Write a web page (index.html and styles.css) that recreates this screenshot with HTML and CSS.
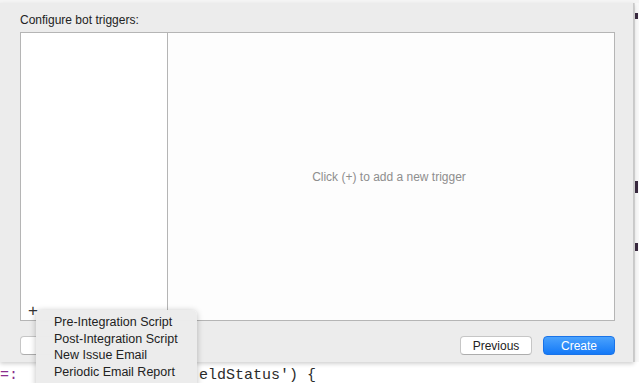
FILE: index.html
```html
<!doctype html>
<html>
<head>
<meta charset="utf-8">
<title>Configure bot triggers</title>
<link rel="stylesheet" href="styles.css">
</head>
<body>
<div class="screen">
  <div class="stage">
    <div class="dialog">
      <div class="label">Configure bot triggers:</div>
      <div class="triggers">
        <div class="list">
          <span class="add">+</span>
        </div>
        <div class="detail">Click (+) to add a new trigger</div>
      </div>
      <div class="footer">
        <button class="btn side">&nbsp;</button>
        <div class="spacer"></div>
        <button class="btn">Previous</button>
        <button class="btn primary">Create</button>
      </div>
    </div>
    <div class="gutter">
      <span class="frag f1"></span>
      <span class="frag f2"></span>
      <span class="frag f3"></span>
    </div>
  </div>
  <div class="code"><span class="kw">=:</span><span class="rest">eldStatus') {</span></div>

  <ul class="menu">
    <li>Pre-Integration Script</li>
    <li>Post-Integration Script</li>
    <li>New Issue Email</li>
    <li>Periodic Email Report</li>
  </ul>
</div>
</body>
</html>
```

FILE: styles.css
```css
html, body {
  margin: 0;
  padding: 0;
  background-color: white;
}
body {
  font-family: "Liberation Sans", Arial, sans-serif;
  font-size: 12px;
  color: #222;
  overflow: hidden;
}
.screen {
  position: relative;
  width: 639px;
  height: 383px;
  overflow: hidden;
}
.stage {
  display: flex;
  height: 362px;
  padding-top: 3px;
  box-sizing: border-box;
  background-color: #f4f4f4;
}
.dialog {
  width: 633px;
  flex-shrink: 0;
  background-color: #ececec;
  border-right: 1px solid #c9c9c9;
  box-shadow: 0 2px 4px rgba(0,0,0,0.18);
  display: flex;
  flex-direction: column;
  position: relative;
  z-index: 1;
}
.label {
  padding: 10px 0 0 20px;
  height: 19px;
  line-height: 14px;
  color: #222;
}
.triggers {
  margin: 0 18px 0 20px;
  height: 287px;
  border: 1px solid #b5b5b5;
  display: grid;
  grid-template-columns: 147px 1fr;
  background-color: white;
}
.list {
  border-right: 1px solid #b5b5b5;
  display: flex;
  align-items: flex-end;
  padding: 0 0 2px 7px;
}
.add {
  font-size: 17px;
  line-height: 14px;
  color: #333;
}
.detail {
  display: flex;
  align-items: center;
  justify-content: center;
  color: #8e8e8e;
  background-color: #fdfdfd;
  padding-right: 4px;
}
.footer {
  display: flex;
  align-items: center;
  margin: 15px 18px 0 20px;
  gap: 11px;
}
.spacer {
  flex: 1;
}
.btn {
  font-family: "Liberation Sans", Arial, sans-serif;
  font-size: 12px;
  height: 19px;
  width: 72px;
  padding: 0;
  border: 1px solid #c6c6c6;
  border-bottom-color: #adadad;
  border-radius: 4px;
  background-color: white;
  color: #222;
}
.btn.side {
  width: 40px;
}
.btn.primary {
  color: white;
  border-color: #1a73e8;
  background: linear-gradient(#4aa2fd, #1479f7);
}
.gutter {
  flex: 1;
  background-color: #f8f8f8;
  border-left: 1px solid #dcdcdc;
  display: flex;
  flex-direction: column;
}
.frag {
  display: block;
  width: 3px;
  margin-left: 0;
  background-color: #3a2a40;
}
.f1 { height: 6px; margin-top: 10px; }
.f2 { height: 12px; margin-top: 162px; }
.f3 { height: 8px; margin-top: 50px; }
.code {
  display: flex;
  font-family: "Liberation Mono", "DejaVu Sans Mono", monospace;
  font-size: 15px;
  line-height: 21px;
  color: #2b2b2b;
  white-space: pre;
  margin-top: 3px;
}
.code .kw {
  color: #8b2d8e;
  width: 199px;
}
.menu {
  position: absolute;
  left: 36px;
  top: 310px;
  width: 161px;
  height: 80px;
  margin: 0;
  padding: 4px 0 0 0;
  list-style: none;
  background-color: rgba(236,236,236,0.98);
  border-radius: 5px;
  box-shadow: 0 1px 6px rgba(0,0,0,0.25);
  z-index: 2;
  box-sizing: border-box;
}
.menu li {
  padding-left: 18px;
  height: 16.7px;
  line-height: 16px;
  font-size: 12.5px;
  color: #222;
}
```
